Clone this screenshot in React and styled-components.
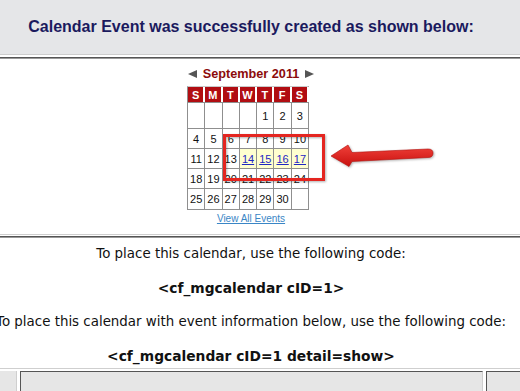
import React from "react"
import styled, { createGlobalStyle } from "styled-components"

const GlobalStyle = createGlobalStyle`
  html, body {
    margin: 0;
    padding: 0;
    background: #fff;
    overflow: hidden;
  }
  body {
    width: 520px;
    height: 391px;
  }
`

const Page = styled.div`
  display: flex;
  flex-direction: column;
  width: 520px;
  overflow: hidden;
`

const TitleBar = styled.div`
  height: 54px;
  background: #e5e6e8;
  border-bottom: 1px solid #cdcdcd;
  display: flex;
  align-items: center;
  justify-content: center;
  padding-right: 18px;
  font-family: "Liberation Sans", Arial, sans-serif;
  font-weight: bold;
  font-size: 16px;
  color: #1b1a5e;
`

const Section = styled.div`
  position: relative;
  margin-top: ${p => p.$gap || 2}px;
  border-top: 1px solid #555;
  border-bottom: 1px solid #cfcfcf;
  box-shadow: inset 0 1px 0 #9a9a9a;
  padding: ${p => p.$pad};
  padding-right: 18px;
  display: flex;
  flex-direction: column;
  align-items: center;
`

const CalendarBlock = styled.div`
  width: 128px;
  display: flex;
  flex-direction: column;
  align-items: flex-start;
`

const Caption = styled.div`
  width: 128px;
  height: 14px;
  display: flex;
  align-items: center;
  justify-content: space-between;
  padding: 0 1px;
  box-sizing: border-box;
  font-family: "Liberation Sans", Arial, sans-serif;
  font-weight: bold;
  font-size: 12.7px;
  color: #8c0b0b;
  margin-bottom: 5px;
`

const NavArrow = styled.svg`
  width: 9px;
  height: 8px;
  display: block;
`

const MonthGrid = styled.div`
  display: grid;
  grid-template-columns: repeat(7, 16.3px);
  grid-template-rows: 15px 25px 19px 19px 19px 20px;
  gap: 1px;
  background: #8f8f8f;
  border: 1px solid #8f8f8f;
  border-top-color: #c9c9c9;
`

const DayHead = styled.div`
  background: #b10d12;
  color: #fff;
  border-right: 1px solid #fff;
  box-shadow: 1px 0 0 #fff;
  display: flex;
  align-items: center;
  justify-content: center;
  font-family: "Liberation Sans", Arial, sans-serif;
  font-weight: bold;
  font-size: 11px;
  &:last-child {
    border-right: none;
    box-shadow: none;
  }
`

const DayCell = styled.div`
  background: ${p => (p.$event ? "#ffffcf" : "#fff")};
  display: flex;
  align-items: center;
  justify-content: center;
  font-family: "Liberation Sans", Arial, sans-serif;
  font-size: 11px;
  color: #111;
`

const EventLink = styled.a`
  color: #1f27c4;
  text-decoration: underline;
`

const AllEvents = styled.a`
  margin-top: 3px;
  line-height: 12px;
  font-family: "Liberation Sans", Arial, sans-serif;
  font-size: 10px;
  color: #3a86c6;
  text-decoration: underline;
`

const Overlay = styled.svg`
  position: absolute;
  left: 0;
  top: 0;
  width: 520px;
  height: 177px;
  pointer-events: none;
  overflow: visible;
`

const CodeText = styled.p`
  margin: 0;
  line-height: 16px;
  white-space: nowrap;
  font-family: "DejaVu Sans", Verdana, sans-serif;
  font-size: ${p => (p.$code ? "13.8px" : "13.4px")};
  font-weight: ${p => (p.$code ? "bold" : "normal")};
  color: #111;
`

const CodeLines = styled.div`
  display: flex;
  flex-direction: column;
  align-items: center;
  gap: 18px;
`

const FooterRow = styled.div`
  margin-top: 2px;
  display: flex;
  gap: 3px;
  height: 30px;
`

const FooterCell = styled.div`
  flex: ${p => (p.$w ? `0 0 ${p.$w}px` : "1 1 auto")};
  background: #e6e6e6;
  border-top: ${p => (p.$plain ? "none" : "1px solid #555")};
  border-left: ${p => (p.$plain ? "none" : "1px solid #555")};
  border-right: ${p => (p.$w ? "1px solid #cfcfcf" : "none")};
`

const weeks = [
  [null, null, null, null, 1, 2, 3],
  [4, 5, 6, 7, 8, 9, 10],
  [11, 12, 13, 14, 15, 16, 17],
  [18, 19, 20, 21, 22, 23, 24],
  [25, 26, 27, 28, 29, 30, null],
]

const eventDays = [14, 15, 16, 17]

const App = () => (
  <Page>
    <GlobalStyle />
    <TitleBar>Calendar Event was successfully created as shown below:</TitleBar>

    <Section $pad="9px 0 9px 0">
      <CalendarBlock>
        <Caption>
          <NavArrow viewBox="0 0 9 8">
            <polygon points="0,4 9,0 9,8" fill="#555" />
          </NavArrow>
          <span>September 2011</span>
          <NavArrow viewBox="0 0 9 8">
            <polygon points="9,4 0,0 0,8" fill="#555" />
          </NavArrow>
        </Caption>
        <MonthGrid>
          {["S", "M", "T", "W", "T", "F", "S"].map((d, i) => (
            <DayHead key={i}>{d}</DayHead>
          ))}
          {weeks.flat().map((day, i) => {
            const ev = eventDays.includes(day)
            return (
              <DayCell key={i} $event={ev}>
                {ev ? <EventLink href="#">{day}</EventLink> : day}
              </DayCell>
            )
          })}
        </MonthGrid>
      </CalendarBlock>
      <AllEvents href="#">View All Events</AllEvents>

      <Overlay viewBox="0 0 520 177">
        <defs>
          <linearGradient id="arrowFill" x1="0" y1="0" x2="0" y2="1">
            <stop offset="0" stopColor="#f0413a" />
            <stop offset="1" stopColor="#c8100e" />
          </linearGradient>
        </defs>
        <g transform="translate(0,-58)">
          <rect
            x="224.5"
            y="135.5"
            width="99"
            height="44"
            fill="none"
            stroke="#e42520"
            strokeWidth="3"
            style={{ filter: "drop-shadow(1px 1px 1px rgba(0,0,0,0.3))" }}
          />
          <path
            d="M331,156 L348,145 L352,152.5 L428,149 Q433,149 433,153 Q433,157.5 428,157.5 L352,161.5 L349,166.5 Z"
            fill="url(#arrowFill)"
            stroke="#b50f0c"
            strokeWidth="0.6"
            style={{ filter: "drop-shadow(1px 1px 1px rgba(0,0,0,0.3))" }}
          />
        </g>
      </Overlay>
    </Section>

    <Section $pad="9px 0 4px 0" $gap={1}>
      <CodeLines>
        <CodeText>To place this calendar, use the following code:</CodeText>
        <CodeText $code>&lt;cf_mgcalendar cID=1&gt;</CodeText>
        <CodeText>
          To place this calendar with event information below, use the following code:
        </CodeText>
        <CodeText $code>&lt;cf_mgcalendar cID=1 detail=show&gt;</CodeText>
      </CodeLines>
    </Section>

    <FooterRow>
      <FooterCell $w={16} $plain />
      <FooterCell $w={461} />
      <FooterCell />
    </FooterRow>
  </Page>
)

export default App
